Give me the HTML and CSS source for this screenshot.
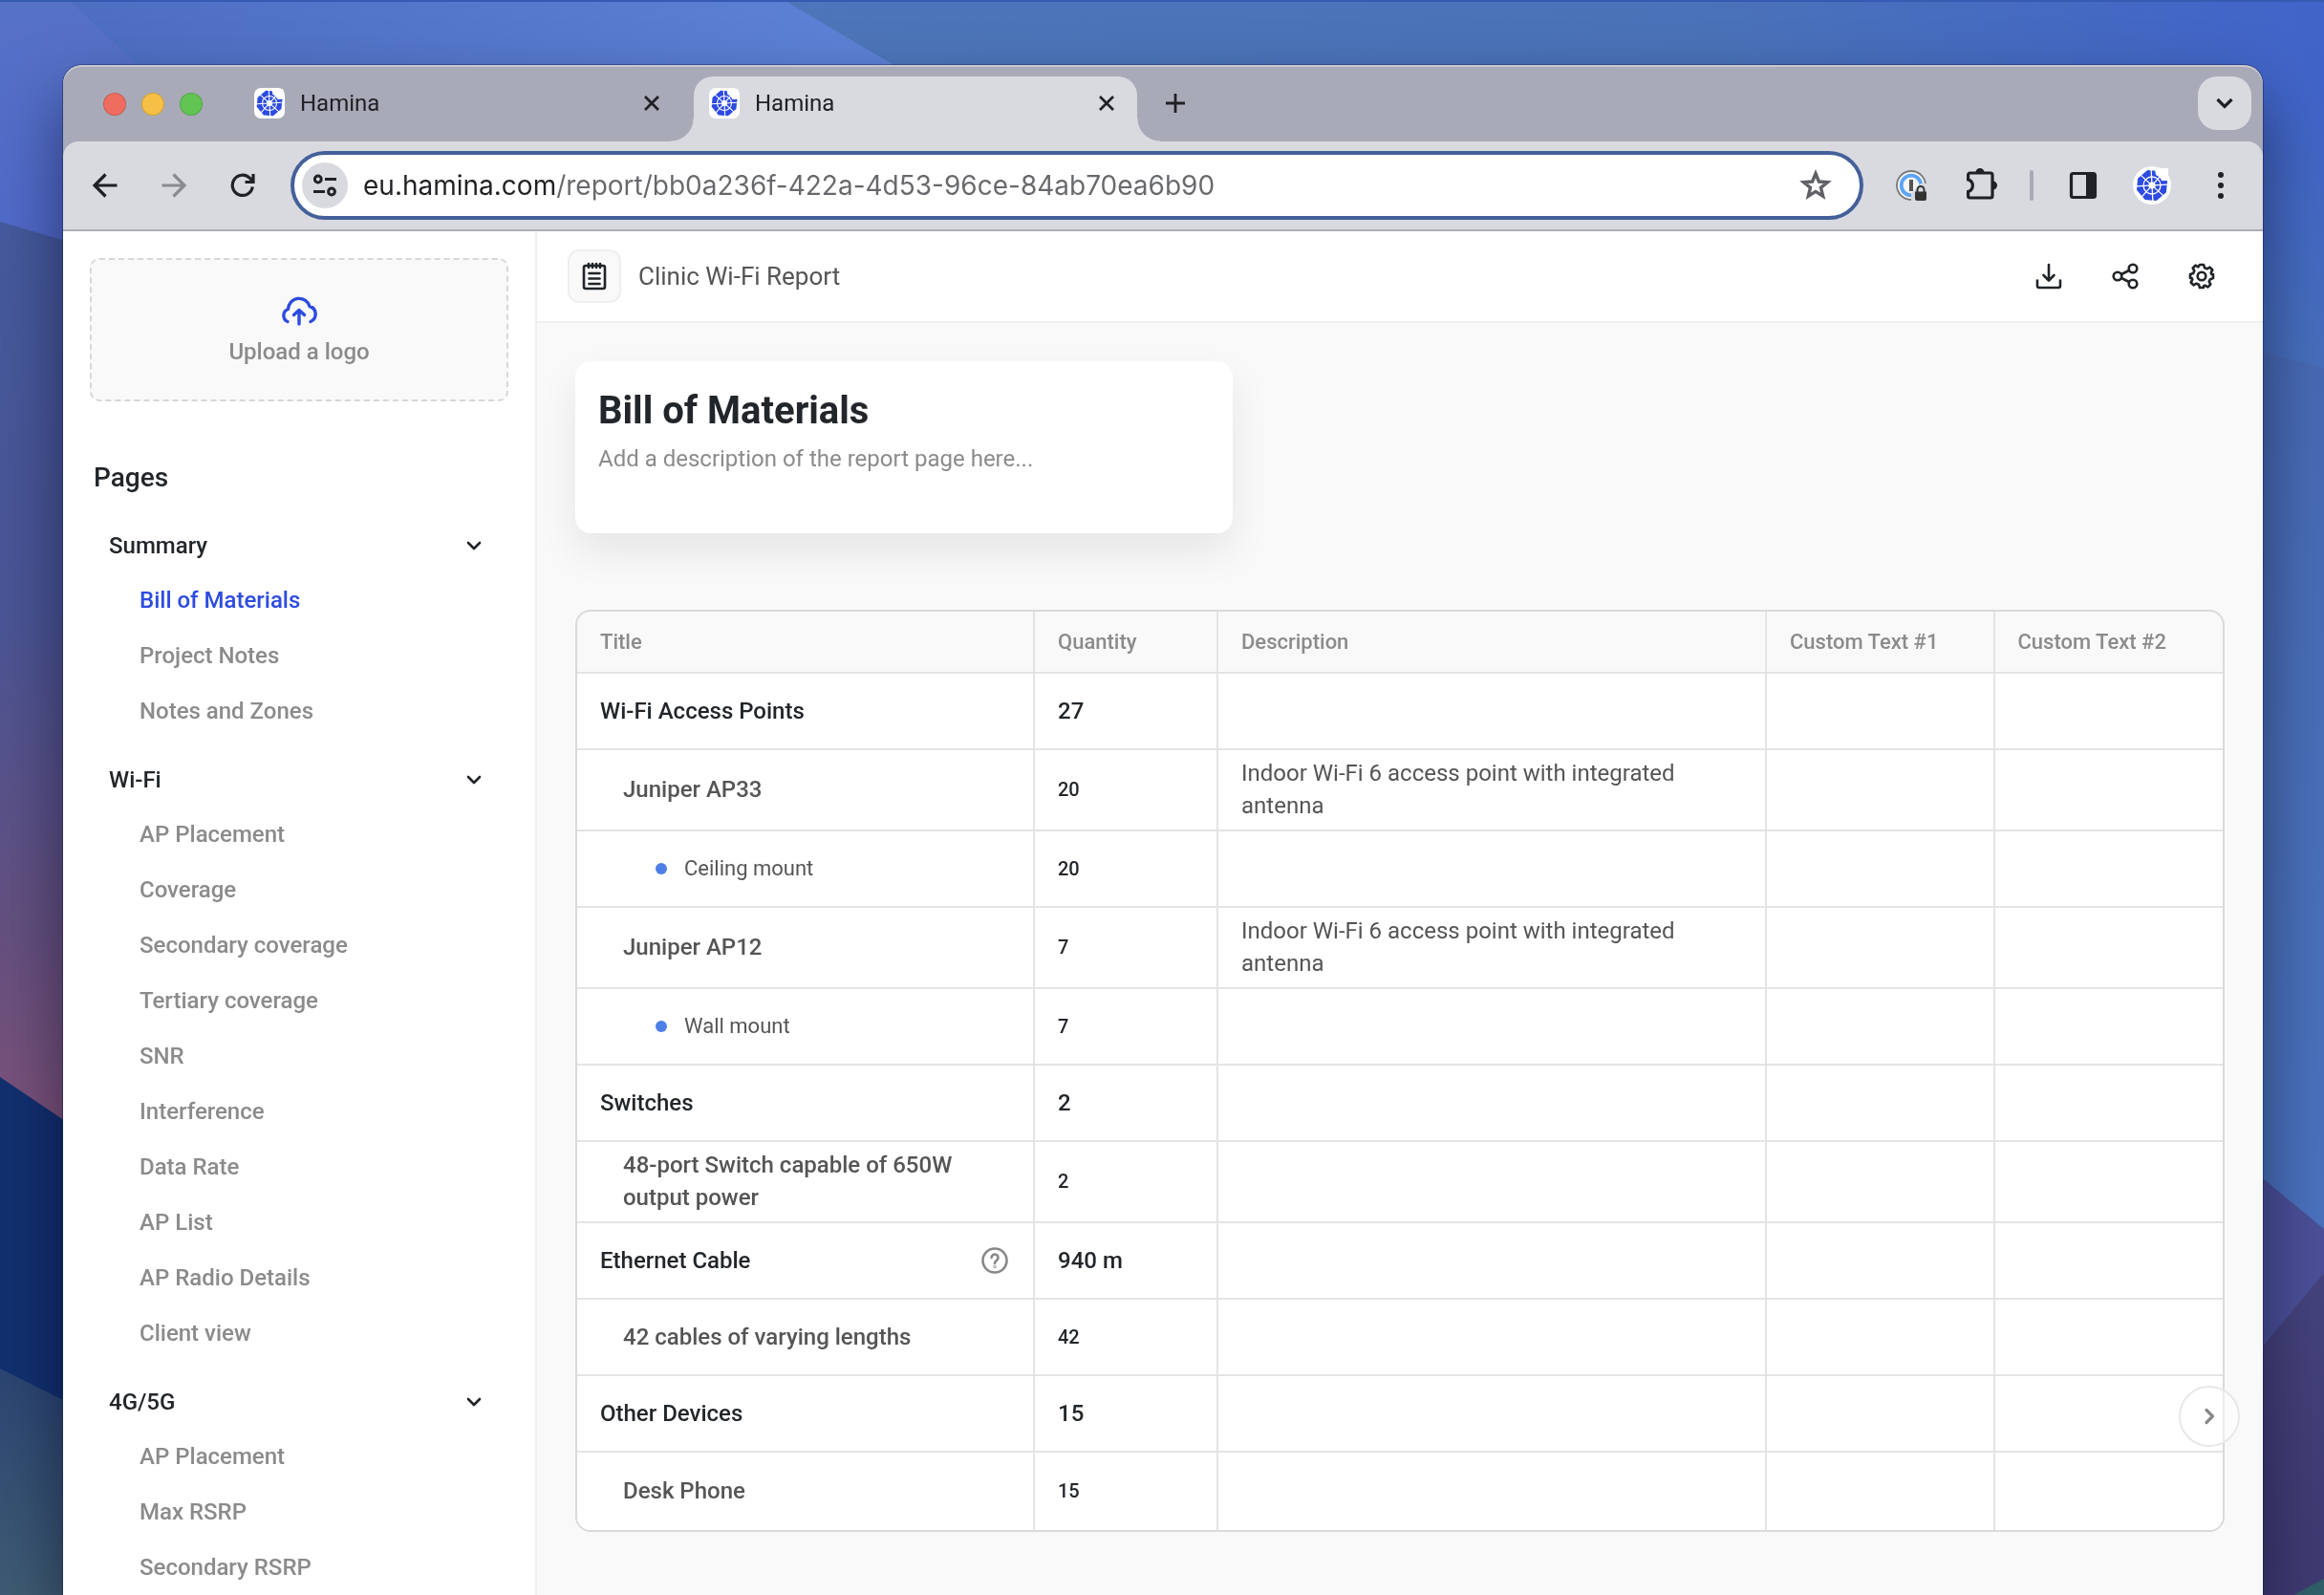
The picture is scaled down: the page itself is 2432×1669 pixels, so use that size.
FILE: index.html
```html
<!DOCTYPE html>
<html lang="en">
<head>
<meta charset="utf-8">
<title>Clinic Wi-Fi Report</title>
<link rel="stylesheet" href="styles.css">
</head>
<body>
<svg class="wallpaper" viewBox="0 0 2432 1669" preserveAspectRatio="none" aria-hidden="true">
  <defs>
    <linearGradient id="sky" x1="0" y1="0" x2="1" y2="0">
      <stop offset="0" stop-color="#4c6cc0"/><stop offset="1" stop-color="#6388dc"/>
    </linearGradient>
    <linearGradient id="east" x1="0" y1="0" x2="1" y2="0">
      <stop offset="0" stop-color="#4d76ba"/><stop offset=".6" stop-color="#4a72b8"/><stop offset="1" stop-color="#4164ca"/>
    </linearGradient>
    <linearGradient id="eastfade" x1="0" y1="0" x2="0" y2="1">
      <stop offset="0" stop-color="#4870bc" stop-opacity="0"/><stop offset="1" stop-color="#4870bc"/>
    </linearGradient>
    <linearGradient id="eastlow" x1="0" y1="0" x2="0" y2="1">
      <stop offset="0" stop-color="#476ab4"/><stop offset=".5" stop-color="#4a70ba"/><stop offset="1" stop-color="#4a72be"/>
    </linearGradient>
    <linearGradient id="west" x1="0" y1="0" x2="0" y2="1">
      <stop offset="0" stop-color="#5672c6"/><stop offset="1" stop-color="#5068cc"/>
    </linearGradient>
    <linearGradient id="dusk" x1="0" y1="0" x2="0" y2="1">
      <stop offset="0" stop-color="#455a9e"/><stop offset=".4" stop-color="#4a5596"/><stop offset=".75" stop-color="#67507f"/><stop offset="1" stop-color="#86547a"/>
    </linearGradient>
    <linearGradient id="sea" x1="0" y1="0" x2="0" y2="1">
      <stop offset="0" stop-color="#2b4674"/><stop offset="1" stop-color="#3f5c74"/>
    </linearGradient>
    <linearGradient id="plum" x1="0" y1="0" x2="0" y2="1">
      <stop offset="0" stop-color="#46447e"/><stop offset="1" stop-color="#3f3a72"/>
    </linearGradient>
  </defs>
  <rect width="2432" height="1669" fill="#4c6cc0"/>
  <rect width="1200" height="300" fill="url(#sky)"/>
  <path d="M0 0H72L220 140V300H0z" fill="url(#west)"/>
  <path d="M820 0H2432V700H2004z" fill="url(#east)"/>
  <rect x="2300" y="100" width="132" height="300" fill="url(#eastfade)"/>
  <path d="M2300 350L2432 385V1300H2300z" fill="url(#eastlow)"/>
  <path d="M0 232L200 290V1250H0z" fill="url(#dusk)"/>
  <path d="M0 1127L200 1262V1669H0z" fill="#123070"/>
  <path d="M0 1432L200 1532V1669H0z" fill="url(#sea)"/>
  <path d="M2300 1177L2432 1286V1669H2300z" fill="#4b5099"/>
  <path d="M2432 1332L2300 1490V1669H2432z" fill="url(#plum)"/>
  <path d="M2400 1669L2432 1652V1669z" fill="#30606a"/>
  <rect width="2432" height="2" fill="#3659b2"/>
</svg>

<svg class="symbols" aria-hidden="true">
  <symbol id="logo" viewBox="-18 -18 36 36">
    <path d="M-6-15.500L6-15.500L15.500-6V6L6 15.500H-6L-15.500 6V-6z" fill="#2d4be0" transform="rotate(5)"/>
    <path d="M3-17L4-11L8-8.500L10.500-4.500L17-5V-18H3z" fill="#fff"/>
    <path d="M10-4.500L15.500-5L16 0L10 0z" fill="#2d4be0"/>
    <path d="M0-16V16M-16 0H16M-11.500-11.500L11.500 11.500M-11.500 11.500L11.500-11.500" stroke="#fff" stroke-width="1.300" transform="rotate(-3)"/>
    <circle r="9" fill="none" stroke="#fff" stroke-width="1.300"/>
    <circle r="3.600" fill="#fff"/>
  </symbol>
  <symbol id="cross" viewBox="0 0 32 32"><path d="M9 9L23 23M23 9L9 23" stroke="#202124" stroke-width="2.800"/></symbol>
  <symbol id="chevron" viewBox="0 0 24 24"><path d="M6 9L12 15L18 9" fill="none" stroke="#202428" stroke-width="2.600" stroke-linecap="round" stroke-linejoin="round"/></symbol>
</svg>

<div class="browser">
  <div class="tab-strip">
    <div class="lights"><i class="light red"></i><i class="light amber"></i><i class="light green"></i></div>
    <div class="tabs">
      <div class="tab">
        <span class="favicon"><svg><use href="#logo"/></svg></span>
        <span class="tab-name">Hamina</span>
        <button class="plain" aria-label="Close tab"><svg><use href="#cross"/></svg></button>
      </div>
      <div class="tab active">
        <span class="favicon"><svg><use href="#logo"/></svg></span>
        <span class="tab-name">Hamina</span>
        <button class="plain" aria-label="Close tab"><svg><use href="#cross"/></svg></button>
      </div>
    </div>
    <button class="plain new-tab" aria-label="New tab"><svg viewBox="0 0 32 32"><path d="M16 6V26M6 16H26" stroke="#202124" stroke-width="2.800"/></svg></button>
    <button class="tab-search" aria-label="Search tabs"><svg viewBox="0 0 32 32"><path d="M8.500 12L16 19.500L23.500 12" fill="none" stroke="#202124" stroke-width="3.200"/></svg></button>
  </div>

  <div class="toolbar">
    <div class="nav">
      <button class="plain" aria-label="Back"><svg viewBox="0 0 32 32"><path d="M28.500 16H5.500M16.500 4.500L5 16L16.500 27.500" fill="none" stroke="#202124" stroke-width="3.200"/></svg></button>
      <button class="plain" aria-label="Forward"><svg viewBox="0 0 32 32"><path d="M3.500 16H26.500M15.500 4.500L27 16L15.500 27.500" fill="none" stroke="#8a8b8f" stroke-width="3.200"/></svg></button>
      <button class="plain" aria-label="Reload"><svg viewBox="0 0 32 32"><path d="M26.300 17.500A10.600 10.600 0 1 1 23.500 8.500L26 11M27 4V12.500H18.500" fill="none" stroke="#202124" stroke-width="3.200"/></svg></button>
    </div>
    <div class="address">
      <button class="site-info" aria-label="Site information"><svg viewBox="0 0 32 32" fill="none" stroke="#202124" stroke-width="3"><circle cx="8.800" cy="9.500" r="3.400"/><path d="M16 9.500H28M4 22.500H16"/><circle cx="23" cy="22.500" r="3.400"/></svg></button>
      <input class="url" type="text" aria-label="Address" value="eu.hamina.com/report/bb0a236f-422a-4d53-96ce-84ab70ea6b90">
      <button class="plain" aria-label="Bookmark"><svg viewBox="0 0 36 36"><path d="M18 5.500L21.400 14L30.500 14.600L23.500 20.400L25.700 29.300L18 24.400L10.300 29.300L12.500 20.400L5.500 14.600L14.600 14z" fill="none" stroke="#5f6165" stroke-width="3.400"/></svg></button>
    </div>
    <div class="extensions">
      <button class="plain" aria-label="Password manager"><svg viewBox="0 0 32 32"><circle cx="16" cy="16" r="15" fill="#f4f4f5" stroke="#77797c" stroke-width="1.800"/><circle cx="16" cy="16" r="10.300" fill="none" stroke="#5ba4f7" stroke-width="3.800"/><rect x="14" y="10" width="4" height="12" fill="#555"/><path d="M32 14H26L16 24V32H32z" fill="#d9dae0"/><path d="M20 22.500h12V30a2 2 0 0 1-2 2H22a2 2 0 0 1-2-2z" fill="#333"/><path d="M22.500 23v-2.500a3.500 3.500 0 0 1 7 0V23" fill="none" stroke="#333" stroke-width="2"/></svg></button>
      <button class="plain" aria-label="Extensions"><svg class="overhang" viewBox="0 0 32 32"><path d="M5.600 3H27a2 2 0 0 1 2 2V27a2 2 0 0 1-2 2H5.600a2 2 0 0 1-2-2V22.500A6.500 6.500 0 0 0 3.600 10V5a2 2 0 0 1 2-2z" fill="none" stroke="#202124" stroke-width="3.200"/><path d="M11.500 2.500a4.500 4.500 0 0 1 9 0zM29.500 11.500a4.500 4.500 0 0 1 0 9z" fill="#202124"/></svg></button>
      <i class="divider"></i>
      <button class="plain" aria-label="Side panel"><svg viewBox="0 0 32 32"><rect x="3.500" y="3.500" width="25" height="25" rx="2" fill="none" stroke="#202124" stroke-width="3.200"/><path d="M19 3H29V29H19z" fill="#202124"/></svg></button>
      <button class="avatar" aria-label="Profile"><svg><use href="#logo"/></svg></button>
      <button class="plain" aria-label="Menu"><svg viewBox="0 0 32 32" fill="#202124"><circle cx="16" cy="5" r="3"/><circle cx="16" cy="16" r="3"/><circle cx="16" cy="27" r="3"/></svg></button>
    </div>
  </div>

  <div class="app">
    <nav class="sidebar">
      <button class="upload">
        <svg viewBox="0 0 40 36" fill="none" stroke="#2d4be0" stroke-width="3.400" stroke-linecap="round" stroke-linejoin="round"><path d="M8 28.500A7 7 0 0 1 8.500 15.500A11.500 11.500 0 0 1 31 12.500A8.500 8.500 0 0 1 32 28.500M20 31V17.500M14.500 21.500L20 16.500L25.500 21.500"/></svg>
        Upload a logo
      </button>
      <h2>Pages</h2>
      <section>
        <button class="group">Summary<svg><use href="#chevron"/></svg></button>
        <ul>
          <li><a class="current" href="#bom">Bill of Materials</a></li>
          <li><a href="#notes">Project Notes</a></li>
          <li><a href="#zones">Notes and Zones</a></li>
        </ul>
      </section>
      <section>
        <button class="group">Wi-Fi<svg><use href="#chevron"/></svg></button>
        <ul>
          <li><a href="#placement">AP Placement</a></li>
          <li><a href="#coverage">Coverage</a></li>
          <li><a href="#secondary">Secondary coverage</a></li>
          <li><a href="#tertiary">Tertiary coverage</a></li>
          <li><a href="#snr">SNR</a></li>
          <li><a href="#interference">Interference</a></li>
          <li><a href="#rate">Data Rate</a></li>
          <li><a href="#list">AP List</a></li>
          <li><a href="#radio">AP Radio Details</a></li>
          <li><a href="#client">Client view</a></li>
        </ul>
      </section>
      <section>
        <button class="group">4G/5G<svg><use href="#chevron"/></svg></button>
        <ul>
          <li><a href="#cell-placement">AP Placement</a></li>
          <li><a href="#max-rsrp">Max RSRP</a></li>
          <li><a href="#secondary-rsrp">Secondary RSRP</a></li>
        </ul>
      </section>
    </nav>

    <div class="content">
      <header class="app-header">
        <button class="report-icon" aria-label="Reports"><svg viewBox="0 0 32 32" fill="none" stroke="#202428" stroke-width="2.600" stroke-linecap="round"><rect x="5" y="5" width="22" height="24" rx="2"/><path d="M10 3V7M14 3V7M18 3V7M22 3V7M10.500 13H21.500M10.500 18.500H21.500M10.500 24H21.500"/></svg></button>
        <span class="report-name">Clinic Wi-Fi Report</span>
        <div class="actions">
          <button class="plain" aria-label="Download"><svg viewBox="0 0 32 32" fill="none" stroke="#202428" stroke-width="2.600" stroke-linecap="round" stroke-linejoin="round"><path d="M16 4V20M10.500 15L16 20.500L21.500 15M4 20.500V26a2 2 0 0 0 2 2H26a2 2 0 0 0 2-2V20.500"/></svg></button>
          <button class="plain" aria-label="Share"><svg viewBox="0 0 32 32" fill="none" stroke="#202428" stroke-width="2.600"><circle cx="8" cy="16" r="4.300"/><circle cx="24" cy="8" r="4.300"/><circle cx="24" cy="24" r="4.300"/><path d="M12 14L20 10M12 18L20 22"/></svg></button>
          <button class="plain" aria-label="Settings"><svg viewBox="0 0 32 32" fill="none" stroke="#202428" stroke-width="2.600" stroke-linejoin="round"><circle cx="16" cy="16" r="4.300"/><path d="M14 4H18L19 7.200L21.600 8.300L24.500 6.700L27.300 9.500L25.700 12.400L26.300 14H28V18L24.800 19.400L23.700 21.600L25.300 24.500L22.500 27.300L19.600 25.700L18 26.300V28H14L13 24.800L10.400 23.700L7.500 25.300L4.700 22.500L6.300 19.600L5.700 18H4V14L7.200 13L8.300 10.400L6.700 7.500L9.500 4.700L12.400 6.300z"/></svg></button>
        </div>
      </header>

      <main>
        <div class="card">
          <h1>Bill of Materials</h1>
          <textarea aria-label="Description" rows="2" placeholder="Add a description of the report page here..."></textarea>
        </div>

        <div class="table-frame">
          <table>
            <colgroup><col class="c-title"><col class="c-quantity"><col class="c-description"><col class="c-custom"><col class="c-custom"></colgroup>
            <thead><tr><th>Title</th><th>Quantity</th><th>Description</th><th>Custom Text #1</th><th>Custom Text #2</th></tr></thead>
            <tbody>
              <tr class="main-row"><td>Wi-Fi Access Points</td><td>27</td><td></td><td></td><td></td></tr>
              <tr class="sub-row"><td>Juniper AP33</td><td>20</td><td>Indoor Wi-Fi 6 access point with integrated antenna</td><td></td><td></td></tr>
              <tr class="mount-row"><td><span class="mount">Ceiling mount</span></td><td>20</td><td></td><td></td><td></td></tr>
              <tr class="sub-row"><td>Juniper AP12</td><td>7</td><td>Indoor Wi-Fi 6 access point with integrated antenna</td><td></td><td></td></tr>
              <tr class="mount-row"><td><span class="mount">Wall mount</span></td><td>7</td><td></td><td></td><td></td></tr>
              <tr class="main-row"><td>Switches</td><td>2</td><td></td><td></td><td></td></tr>
              <tr class="sub-row"><td>48-port Switch capable of 650W output power</td><td>2</td><td></td><td></td><td></td></tr>
              <tr class="main-row"><td><div class="with-help">Ethernet Cable<button class="plain" aria-label="Help"><svg viewBox="0 0 32 32" fill="none" stroke="#86888a" stroke-width="2.600" stroke-linecap="round"><circle cx="16" cy="16" r="12.500"/><path d="M12.500 13a3.500 3.500 0 1 1 5.500 2.900C16.500 17 16 17.500 16 19"/><circle cx="16" cy="22.500" r=".4"/></svg></button></div></td><td>940 m</td><td></td><td></td><td></td></tr>
              <tr class="sub-row"><td>42 cables of varying lengths</td><td>42</td><td></td><td></td><td></td></tr>
              <tr class="main-row"><td>Other Devices</td><td>15</td><td></td><td></td><td></td></tr>
              <tr class="sub-row"><td>Desk Phone</td><td>15</td><td></td><td></td><td></td></tr>
            </tbody>
          </table>
        </div>
      </main>
      <button class="next" aria-label="Next page"><svg viewBox="0 0 32 32"><path d="M13 9.500L19.500 16L13 22.500" fill="none" stroke="#86888a" stroke-width="3.200" stroke-linecap="round" stroke-linejoin="round"/></svg></button>
    </div>
  </div>
</div>
</body>
</html>
```
FILE: styles.css
```css
* { box-sizing: border-box; }

body {
  margin: 0;
  height: 100vh;
  overflow: hidden;
  display: flex;
  padding: 68px 64px 0 66px;
  font-family: Roboto, "Liberation Sans", sans-serif;
  font-size: 24px;
  color: #22262a;
}

button, input, textarea { font: inherit; color: inherit; }
button { border: 0; padding: 0; cursor: pointer; }
svg { display: block; }
h1, h2, ul { margin: 0; padding: 0; }

.wallpaper { position: fixed; inset: 0; width: 100%; height: 100%; z-index: -1; }
.symbols { position: absolute; width: 0; height: 0; }

.plain { background: none; width: 32px; height: 32px; flex: none; }
.plain svg { width: 100%; height: 100%; }
.plain .overhang { overflow: visible; }

/* Browser window */
.browser {
  flex: 1;
  min-width: 0;
  display: flex;
  flex-direction: column;
  border-radius: 20px 20px 0 0;
  background: #a8aab8;
  box-shadow: 0 0 0 1px rgba(20, 30, 80, .45), 0 36px 70px rgba(0, 0, 20, .5);
}

.tab-strip {
  display: flex;
  align-items: flex-end;
  flex: none;
  height: 80px;
  padding: 0 12px 0 42px;
  border-radius: 20px 20px 0 0;
  box-shadow: inset 0 2px 0 #c6c7d0;
}
.lights { display: flex; gap: 16px; margin: 0 38px 27px 0; }
.light { width: 24px; height: 24px; border-radius: 50%; border: 1px solid rgba(0, 0, 0, .15); }
.red { background: #ee6d5e; }
.amber { background: #f6bf45; }
.green { background: #61c453; }

.tabs { display: flex; gap: 12px; }
.tab {
  width: 464px;
  height: 68px;
  padding: 0 16px 12px;
  display: flex;
  align-items: center;
  gap: 16px;
  color: #202124;
}
.tab-name { flex: 1; }
.favicon { width: 32px; height: 32px; padding: 1px; border-radius: 7px; background: #fff; }
.favicon svg { width: 30px; height: 30px; }
.active { position: relative; background: #d9dadf; border-radius: 20px 20px 0 0; }
.active::before, .active::after {
  content: "";
  position: absolute;
  bottom: 0;
  width: 24px;
  height: 24px;
}
.active::before { right: 100%; background: radial-gradient(circle at 0 0, transparent 23px, #d9dadf 24px); }
.active::after { left: 100%; background: radial-gradient(circle at 100% 0, transparent 23px, #d9dadf 24px); }
.new-tab { margin: 0 auto 24px 24px; }
.tab-search {
  width: 56px;
  height: 56px;
  margin-bottom: 12px;
  padding: 12px;
  border-radius: 20px;
  background: #d9dadf;
}

.toolbar {
  display: flex;
  align-items: center;
  flex: none;
  height: 94px;
  padding: 0 28px;
  border-radius: 16px 16px 0 0;
  border-bottom: 2px solid #adaeb5;
  background: #d9dadf;
}
.nav { display: flex; gap: 40px; margin-right: 34px; }
.address {
  flex: 1;
  display: flex;
  align-items: center;
  gap: 16px;
  height: 72px;
  padding: 0 28px 0 8px;
  border: 4px solid #44609a;
  border-radius: 36px;
  background: #fff;
}
.address .plain { width: 36px; height: 36px; }
.site-info { width: 48px; height: 48px; padding: 8px; border-radius: 50%; background: #d9dadf; }
.url {
  flex: 1;
  height: 48px;
  padding: 0;
  border: 0;
  outline: 0;
  font-family: Inter, Roboto, sans-serif;
  font-size: 28px;
  color: transparent;
  background: linear-gradient(to right, #202124 200px, #66686b 200px);
  -webkit-background-clip: text;
  background-clip: text;
}
.extensions { display: flex; align-items: center; gap: 36px; margin-left: 34px; }
.extensions .plain:first-child { margin-right: 4px; }
.divider { width: 4px; height: 32px; border-radius: 2px; background: #a8aab8; }
.avatar { width: 40px; height: 40px; padding: 2px; border-radius: 50%; background: #fff; }
.avatar svg { width: 36px; height: 36px; }

/* Application */
.app { flex: 1; min-height: 0; display: flex; background: #fff; }
.sidebar {
  flex: none;
  width: 496px;
  padding: 28px;
  border-right: 2px solid #efeff0;
  overflow: hidden;
}
.upload {
  width: 100%;
  height: 150px;
  display: flex;
  flex-direction: column;
  align-items: center;
  justify-content: center;
  gap: 10px;
  border: 2px dashed #d6d7d8;
  border-radius: 10px;
  background: #f9f9f9;
  color: #8b8b8b;
  font-weight: 500;
}
.upload svg { width: 40px; height: 36px; }
.sidebar h2 { margin: 60px 4px 23px; font-size: 28px; line-height: 40px; font-weight: 500; }
.sidebar section { padding: 0 20px; margin-bottom: 15px; }
.group {
  display: flex;
  align-items: center;
  justify-content: space-between;
  width: 100%;
  height: 56px;
  background: none;
  font-weight: 500;
}
.group svg { width: 24px; height: 24px; margin-right: 4px; }
.sidebar ul { list-style: none; padding-left: 32px; }
.sidebar a { display: block; line-height: 58px; font-weight: 500; color: #8b8b8b; text-decoration: none; }
.sidebar .current { color: #2d4be0; }

.content { position: relative; flex: 1; min-width: 0; background: #f9f9f9; }
.app-header {
  display: flex;
  align-items: center;
  gap: 18px;
  height: 96px;
  padding: 0 48px 0 32px;
  border-bottom: 2px solid #efeff0;
  background: #fff;
}
.report-icon {
  width: 56px;
  height: 56px;
  padding: 10px;
  border: 2px solid #efeff0;
  border-radius: 12px;
  background: #f9f9f9;
}
.report-name { flex: 1; font-size: 26px; color: #555; }
.actions { display: flex; gap: 48px; }

main { padding: 40px; }
.card {
  width: 688px;
  padding: 28px 24px;
  border-radius: 16px;
  background: #fff;
  box-shadow: 0 20px 40px rgba(0, 0, 0, .08);
}
.card h1 { font-size: 40px; line-height: 48px; font-weight: 700; }
.card textarea {
  display: block;
  width: 100%;
  height: 68px;
  margin-top: 8px;
  padding: 0;
  border: 0;
  outline: 0;
  resize: none;
  background: none;
  line-height: 36px;
}
.card textarea::placeholder { color: #8b8b8b; opacity: 1; }

.table-frame {
  margin-top: 80px;
  border: 2px solid #d9dadb;
  border-radius: 16px;
  overflow: hidden;
}
table { width: 100%; table-layout: fixed; border-collapse: separate; border-spacing: 0; }
.c-title { width: 479px; }
.c-quantity { width: 192px; }
.c-description { width: 574px; }
th, td {
  padding: 7px 24px 8px;
  line-height: 34px;
  text-align: left;
  vertical-align: middle;
  border-right: 2px solid #e4e4e6;
  border-bottom: 2px solid #e4e4e6;
}
th:last-child, td:last-child { border-right: 0; }
th { height: 65px; padding: 8px 24px; font-size: 22px; font-weight: 500; color: #8b8b8b; }
td { height: 80px; background: #fff; color: #555; }
tbody tr:last-child td { border-bottom: 0; height: 81px; }
.main-row td { font-weight: 500; color: #22262a; }
.sub-row td:first-child { padding-left: 48px; font-weight: 500; }
.sub-row td:nth-child(2), .mount-row td:nth-child(2) { font-size: 20px; font-weight: 500; color: #22262a; }
.mount { display: flex; align-items: center; gap: 18px; padding-left: 58px; font-size: 22px; }
.mount::before { content: ""; width: 12px; height: 12px; border-radius: 50%; background: #4d7fe6; }
.with-help { display: flex; align-items: center; justify-content: space-between; }

.next {
  position: absolute;
  right: 24px;
  bottom: 155px;
  width: 64px;
  height: 64px;
  padding: 14px;
  border: 2px solid #e8e8e8;
  border-radius: 50%;
  background: rgba(255, 255, 255, .5);
}
```
